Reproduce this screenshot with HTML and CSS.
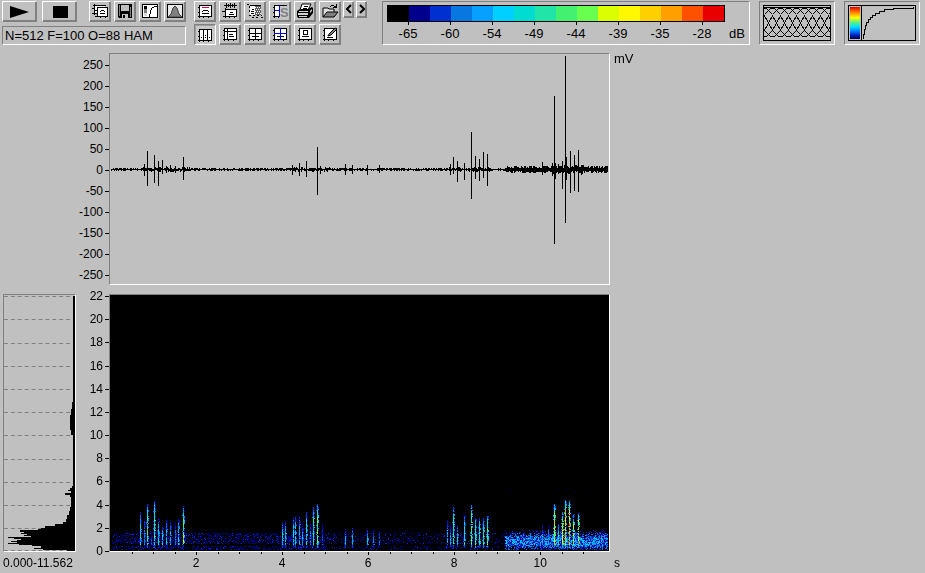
FILE: index.html
```html
<!DOCTYPE html>
<html lang="en">
<head>
    <meta charset="UTF-8">
    <meta name="viewport" content="width=device-width, initial-scale=1.0">
    <title>Spectrogram</title>
    <link rel="stylesheet" href="styles.css">
</head>
<body>
    <!-- Shared plot frame used by most toolbar icons -->
    <svg width="0" height="0" class="defs">
        <g id="frame">
            <path d="M4 3h11v10H4z" fill="#fff"/>
            <path d="M3 2h1v13h-1zM15 2h1v11h-1zM4 2h12v1h-12zM2 13h14v1h-14zM2 4h1v1h-1zM2 9h1v1h-1zM7 14h1v1h-1zM12 14h1v1h-1z"/>
        </g>
    </svg>

    <header class="toolbar">
        <div class="transport">
            <div class="row">
                <button class="btn wide" aria-label="Play"><svg viewBox="0 0 31 16"><path d="M6 3l19 6-19 6z"/></svg></button>
                <button class="btn wide" aria-label="Stop"><svg viewBox="0 0 31 16"><path d="M9 3h15v12H9z"/></svg></button>
                <div class="file-buttons">
                    <button class="btn" aria-label="Copy">
                        <svg viewBox="0 0 18 16"><path d="M3 3h11v8H3z" fill="#fff"/><path d="M2 2h13v1H2zM3 1h1v11H3zM1 5h2v1H1zM1 10h5v1H1z"/><path d="M6 5h11v8H6z" fill="#fff"/><path d="M6 4h11v1H6zM6 4h1v10H6zM16 4h1v10h-1zM4 13h13v1H4zM9 10h5v1H9zM9 8h1v1H9zM13 8h1v1h-1zM10 7h3v1h-3zM9 14h1v1H9zM14 14h1v1h-1zM4 7h2v1H4z"/></svg>
                    </button>
                    <button class="btn" aria-label="Save">
                        <svg viewBox="0 0 18 16"><path d="M2 1h14v14H3l-1-1z"/><path d="M5 2h8v6H5z" fill="#c0c0c0"/><path d="M6 11h6v4H6z" fill="#c0c0c0"/><path d="M7 12h2v3H7z"/><path d="M3 2h1v11H3zM14 4h1v10h-1z" fill="#808080"/></svg>
                    </button>
                    <button class="btn" aria-label="Palette">
                        <svg viewBox="0 0 18 16"><path d="M1 1h16v14H1z"/><path d="M2 2h14v12H2z" fill="#fff"/><path d="M3 3h3v3H3z"/><path d="M3 6h3v4H3z" fill="#808080"/><path d="M3 10h3v3H3z" fill="#d8d8d8"/><path d="M8 11h1v3H8zM9 7h1v4H9zM10 5h1v2h-1zM11 4h2v1h-2zM13 3h3v1h-3z"/></svg>
                    </button>
                    <button class="btn" aria-label="Window function">
                        <svg viewBox="0 0 18 16"><path d="M1 1h16v14H1z"/><path d="M2 2h14v12H2z" fill="#e8e8e8"/><path d="M2 14l3-3 2-6 2-2 2 2 2 6 3 3z" fill="#808080" stroke="#404040"/></svg>
                    </button>
                </div>
            </div>
            <output class="status">N=512 F=100 O=88 HAM</output>
        </div>

        <div class="tools">
            <div class="tool-row">
                <button class="btn" aria-label="Redraw"><svg viewBox="0 0 18 16"><use href="#frame"/><path d="M6 4h7v1H6z" fill="#e00050"/><path d="M7 7h5v1H7zM6 8h1v1H6zM12 8h1v1h-1zM6 10h7v1H6z"/></svg></button>
                <button class="btn" aria-label="Waveform"><svg viewBox="0 0 18 16"><path d="M5 6h11v8H5z" fill="#fff"/><path d="M3 2h13v1H3zM5 0h1v5H5zM7 1h1v3H7zM9 0h1v5H9zM11 1h1v3h-1zM13 0h1v5h-1zM4 5h1v10H4zM4 6h12v1H4zM15 6h1v8h-1zM2 13h14v1H2zM1 8h3v1H1zM8 11h5v1H8zM9 9h3v1H9zM8 14h1v1H8zM13 14h1v1h-1z"/></svg></button>
                <button class="btn" aria-label="Select range"><svg viewBox="0 0 18 16"><path d="M4 3h5v9H4z" fill="#fff"/><path d="M9 3h6v9H9z" fill="#606060"/><path d="M1 1h2v1H1zM4 2h11v1H4zM3 3h1v2H3zM3 7h1v2H3zM3 12h2v1H3zM7 12h2v1H7zM11 12h2v1h-2zM15 12h1v1h-1zM6 6h2v1H6zM5 8h3v1H5zM5 10h3v1H5zM6 14h2v1H6zM10 14h2v1h-2zM15 14h2v1h-2z"/><path d="M9 4h1v1H9zM11 4h1v1h-1zM13 4h1v1h-1zM10 6h1v1h-1zM12 6h1v1h-1zM14 6h1v1h-1zM9 8h1v1H9zM11 8h1v1h-1zM13 8h1v1h-1zM10 10h1v1h-1zM12 10h1v1h-1zM14 10h1v1h-1z" fill="#fff"/></svg></button>
                <button class="btn" aria-label="Spectrum"><svg viewBox="0 0 18 16"><use href="#frame"/><path d="M9 3h9v12H9z" fill="#c8c8c8"/><path d="M8 2h1v12H8zM4 7h5v1H4z" fill="#0000e0"/><text x="9" y="14" class="s-letter">S</text></svg></button>
                <button class="btn" aria-label="Print"><svg viewBox="0 0 18 16"><path d="M6 1h9l-3 6H4z" fill="#fff" stroke="#000"/><path d="M8 3h4v1H8zM7 5h4v1H7z"/><path d="M1 8l3-2h8l4-2 1 1v5l-4 5H2l-1-2z"/><path d="M3 8h9v1H3zM2 10h10v2H2zM3 13h8v1H3zM14 8l2-2v2l-2 2z" fill="#d0d0d0"/></svg></button>
                <button class="btn" aria-label="Open"><svg viewBox="0 0 18 16"><path d="M2 14V5h5l1 1h5v3" fill="#e0e0e0" stroke="#000"/><path d="M2 14l4-5h11l-4 5z" fill="#808080" stroke="#000"/><path d="M10 2h3v1h-3zM9 3h1v1H9zM13 3h1v1h-1zM12 4h4v1h-4zM15 1h1v4h-1zM14 3h1v1h-1z"/></svg></button>
                <div class="steppers">
                    <button class="btn slim" aria-label="Previous"><svg viewBox="0 0 7 12"><path d="M6 2L2 6l4 4" class="chevron"/></svg></button>
                    <button class="btn slim" aria-label="Next"><svg viewBox="0 0 7 12"><path d="M2 2l4 4-4 4" class="chevron"/></svg></button>
                </div>
            </div>
            <div class="tool-row">
                <button class="btn pressed" aria-label="Column cursor"><svg viewBox="0 0 18 16"><use href="#frame"/><path d="M7 3h1v10H7zM11 3h1v10h-1zM5 10h1v1H5zM9 8h1v1H9zM9 10h1v1H9zM13 10h1v1h-1z"/></svg></button>
                <button class="btn" aria-label="Corner cursor"><svg viewBox="0 0 18 16"><use href="#frame"/><path d="M6 3h1v10H6zM4 5h11v1H4zM8 8h4v1H8zM8 10h5v1H8z"/></svg></button>
                <button class="btn" aria-label="Cross cursor"><svg viewBox="0 0 18 16"><use href="#frame"/><path d="M9 3h1v10H9zM4 7h11v1H4zM6 10h7v1H6z"/></svg></button>
                <button class="btn" aria-label="Free cursor"><svg viewBox="0 0 18 16"><use href="#frame"/><path d="M6 10h7v1H6z"/><path d="M9 2h1v12H9zM3 7h13v1H3z" fill="#0000e0"/></svg></button>
                <button class="btn" aria-label="Box cursor"><svg viewBox="0 0 18 16"><use href="#frame"/><path d="M7 4h5v1H7zM7 8h5v1H7zM7 5h1v3H7zM11 5h1v3h-1zM6 10h7v1H6z"/></svg></button>
                <button class="btn" aria-label="Edit"><svg viewBox="0 0 18 16"><use href="#frame"/><path d="M6 11h6v1H6z"/><path d="M8 8l6-6 2 1-6 6-3 1z" fill="#808080" stroke="#000"/></svg></button>
            </div>
        </div>

        <section class="panel scale">
            <div class="scale-bar" id="scaleBar"></div>
            <div class="scale-labels">
                <span>-65</span><span>-60</span><span>-54</span><span>-49</span><span>-44</span><span>-39</span><span>-35</span><span>-28</span>
                <span class="unit">dB</span>
            </div>
        </section>

        <section class="panel preview window-preview">
            <canvas id="overlap" width="66" height="34"></canvas>
        </section>
        <section class="panel preview palette-preview">
            <div class="mini-palette"></div>
            <svg viewBox="0 0 53 34" preserveAspectRatio="none"><path d="M1.500 33v-5h1v-5h1v-4h1v-3h2v-3h2v-2h2v-2h3v-2h4v-2h5v-2h9v-1h20v-1" fill="none" stroke="#000"/></svg>
        </section>
    </header>

    <main class="plots">
        <ul class="axis axis-mv">
            <li>250</li><li>200</li><li>150</li><li>100</li><li>50</li><li>0</li>
            <li>-50</li><li>-100</li><li>-150</li><li>-200</li><li>-250</li>
        </ul>
        <div class="plot wave"><canvas id="wave" width="499" height="230"></canvas></div>
        <span class="unit-mv">mV</span>

        <div class="plot average">
            <svg viewBox="0 0 72 256" preserveAspectRatio="none">
                <path class="grid-line" d="M0 1.500h72M0 24.500h72M0 48.500h72M0 71.500h72M0 94.500h72M0 117.500h72M0 140.500h72M0 164.500h72M0 187.500h72M0 210.500h72M0 233.500h72M0 255.500h72"/>
                <path d="M72 1H70V107H69V114H68V120H67V135H68V140H70V191H69V193H67V195H65V196H68V198H62V200H67V202H68V212H67V216H66V220H64V224H63V227H60V229H52V231H42V233H38V234H34V235H16V237H20V238H17V239H23V240H20V241H27V242H4V243H10V244H17V245H13V246H7V247H13V248H4V249H15V250H28V251H38V253H30V254H40V255H64V256H72z"/>
            </svg>
        </div>
        <ul class="axis axis-khz">
            <li>22</li><li>20</li><li>18</li><li>16</li><li>14</li><li>12</li>
            <li>10</li><li>8</li><li>6</li><li>4</li><li>2</li><li>0</li>
        </ul>
        <div class="plot spectro"><canvas id="spectro" width="499" height="256"></canvas></div>

        <span class="range">0.000-11.562</span>
        <div class="axis-time">
            <svg viewBox="0 0 499 3" preserveAspectRatio="none"><path d="M22.500 0v2M43.500 0v2M65.500 0v2M86.500 0v3M108.500 0v2M129.500 0v2M151.500 0v2M172.500 0v3M194.500 0v2M215.500 0v2M237.500 0v2M258.500 0v3M280.500 0v2M301.500 0v2M323.500 0v2M344.500 0v3M366.500 0v2M387.500 0v2M409.500 0v2M430.500 0v3M452.500 0v2M473.500 0v2" stroke="#000"/></svg>
            <div class="time-labels"><span>2</span><span>4</span><span>6</span><span>8</span><span>10</span></div>
        </div>
        <span class="unit-s">s</span>
    </main>

    <script src="plots.js"></script>
</body>
</html>
```
FILE: styles.css
```css
* {
    box-sizing: border-box;
}

body {
    margin: 0;
    height: 100vh;
    min-height: 480px;
    display: flex;
    flex-direction: column;
    overflow: hidden;
    background: #c0c0c0;
    color: #000;
    font-family: "Liberation Sans", Arial, sans-serif;
    font-size: 12px;
    line-height: 15px;
}

.defs {
    position: absolute;
}

svg {
    display: block;
    shape-rendering: crispEdges;
}

canvas {
    display: block;
    width: 100%;
    height: 100%;
    image-rendering: pixelated;
}

/* Toolbar */
.toolbar {
    display: flex;
    align-items: flex-start;
    padding: 1px 5px 0 2px;
    height: 53px;
    flex: none;
}

.transport {
    width: 184px;
    margin-right: 8px;
    flex: none;
}

.row {
    display: flex;
    gap: 5px;
}

.file-buttons {
    display: flex;
    gap: 3px;
    margin-left: auto;
}

.tools {
    display: flex;
    flex-direction: column;
    gap: 2px;
    margin-right: 15px;
    flex: none;
}

.tool-row {
    display: flex;
    gap: 3px;
}

.btn {
    width: 22px;
    height: 21px;
    padding: 1px;
    display: flex;
    align-items: flex-start;
    justify-content: flex-start;
    background: #c0c0c0;
    border: 1px solid;
    border-color: #fff #808080 #808080 #fff;
    box-shadow: inset -1px -1px #808080;
}

.btn svg {
    width: 18px;
    height: 16px;
    flex: none;
    shape-rendering: auto;
}

.btn.wide {
    width: 35px;
}

.btn.wide svg {
    width: 31px;
}

.btn.slim {
    width: 11px;
    height: 17px;
}

.btn.slim svg {
    width: 7px;
    height: 12px;
}

.btn.pressed {
    border-color: #808080 #fff #fff #808080;
    box-shadow: inset 1px 1px #a0a0a0;
    padding-top: 2px;
    background: #c8c8c8;
}

.steppers {
    display: flex;
    gap: 2px;
    margin-left: -1px;
}

.chevron {
    fill: none;
    stroke: #000;
    stroke-width: 2;
}

.s-letter {
    font-size: 13px;
    font-weight: bold;
    fill: #808080;
}

.status {
    display: block;
    margin-top: 4px;
    height: 19px;
    padding: 0 2px;
    font-size: 13px;
    line-height: 17px;
    white-space: nowrap;
}

.status,
.panel,
.plot {
    border: 1px solid;
    border-color: #808080 #fff #fff #808080;
}

.panel {
    height: 44px;
    flex: none;
}

/* Colour scale */
.scale {
    width: 368px;
    padding: 3px 4px;
    margin-right: 9px;
}

.scale-bar {
    display: flex;
    width: 338px;
    height: 17px;
    border: 1px solid #000;
}

.scale-bar i {
    flex: 1;
}

.scale-labels {
    display: flex;
    font-size: 13px;
}

.scale-labels span {
    width: 42px;
    flex: none;
    display: flex;
    flex-direction: column;
    align-items: center;
    line-height: 17px;
}

.scale-labels span::before {
    content: "";
    width: 1px;
    height: 3px;
    background: #000;
}

.scale-labels .unit {
    width: 22px;
    align-items: flex-end;
}

.scale-labels .unit::before {
    background: none;
}

/* Small previews */
.preview {
    width: 76px;
    padding: 3px;
}

.preview canvas {
    border: 1px solid #000;
}

.window-preview {
    margin-right: 9px;
}

.palette-preview {
    display: flex;
}

.mini-palette {
    width: 14px;
    border: 1px solid #000;
    background: linear-gradient(#e00000, #ff7000 15%, #ffff00 33%, #60f080 48%, #00e0ff 62%, #0080ff 75%, #0020c0 88%, #000040) content-box;
    padding: 1px;
}

.palette-preview svg {
    flex: 1;
    min-width: 0;
    height: 36px;
    border: 1px solid #000;
    border-left: 0;
}

/* Plots */
.plots {
    flex: 1;
    display: grid;
    grid-template-columns: 73px 33px 501fr 315fr;
    grid-template-rows: 232fr 9px 258fr 21px;
    padding-left: 3px;
    min-height: 0;
}

.plot {
    min-width: 0;
    min-height: 0;
    overflow: hidden;
}

.wave {
    grid-area: 1 / 3;
}

.spectro {
    grid-area: 3 / 3;
    background: #000;
}

.average {
    grid-area: 3 / 1;
}

.average svg {
    width: 100%;
    height: 100%;
}

.grid-line {
    fill: none;
    stroke: #808080;
    stroke-dasharray: 4 3;
}

.axis {
    list-style: none;
    margin: 0;
    padding: 0;
    display: flex;
    flex-direction: column;
}

.axis li {
    display: flex;
    align-items: center;
    justify-content: flex-end;
    gap: 2px;
    height: 15px;
}

.axis li::after {
    content: "";
    width: 4px;
    height: 1px;
    background: #000;
}

.axis-mv {
    grid-area: 1 / 1 / 2 / 3;
    padding-top: 2px;
    margin-bottom: -1px;
}

.axis-mv li {
    flex: 1;
}

.axis-khz {
    grid-area: 3 / 2;
    justify-content: space-between;
    margin: -5px 0 -7px;
}

.unit-mv {
    grid-area: 1 / 4;
    font-size: 13px;
    padding: 0 4px;
    line-height: 12px;
}

.unit-s {
    grid-area: 4 / 4;
    padding: 4px;
}

.range {
    grid-area: 4 / 1 / 5 / 3;
    padding: 4px 0;
}

.axis-time {
    grid-area: 4 / 3;
    padding: 0 1px;
}

.axis-time svg {
    width: 100%;
    height: 3px;
}

.time-labels {
    display: flex;
    padding-top: 1px;
}

.time-labels span {
    flex: 20;
    text-align: center;
}

.time-labels::before {
    content: "";
    flex: 10;
}

.time-labels::after {
    content: "";
    flex: 6;
}
```
FILE: plots.js
```js
const palette = ['#000000', '#00008c', '#0030d0', '#0878e0', '#08a0ff', '#00d0ff', '#00dcd0', '#20e4a8',
    '#44f070', '#68ff50', '#dcff00', '#fff800', '#ffd000', '#ffa000', '#ff5000', '#e80000'];

// Repeatable noise, so the plots look the same on every load
let seed = 7;
function rnd() {
    seed = (seed * 16807) % 2147483647;
    return seed / 2147483647;
}

function drawScale() {
    const bar = document.getElementById('scaleBar');
    palette.forEach(color => {
        const cell = document.createElement('i');
        cell.style.background = color;
        bar.appendChild(cell);
    });
}

// Overlapping analysis windows
function drawOverlap() {
    const ctx = document.getElementById('overlap').getContext('2d');
    ctx.fillRect(0, 1, 66, 1);
    for (let shift = 0; shift < 48; shift += 8) {
        for (let x = 0; x < 66; x++) {
            const y = Math.round(16 - 14 * Math.cos(2 * Math.PI * (x - shift) / 48));
            ctx.fillRect(x, y, 1, 1);
            // steep parts need two pixels per column
            if (y > 8 && y < 24) ctx.fillRect(x, y + 1, 1, 1);
        }
    }
}

// [x, peak above zero, peak below zero]
const spikes = [
    [34, 5, 6], [37, 18, 16], [44, 14, 13], [48, 8, 16], [52, 9, 4], [56, 3, 3], [60, 4, 2], [65, 3, 3], [73, 12, 10],
    [182, 4, 5], [189, 6, 6], [196, 8, 7], [207, 22, 25], [210, 3, 4], [235, 5, 5], [242, 4, 4], [257, 4, 5], [269, 4, 3],
    [340, 5, 5], [343, 12, 4], [347, 8, 12], [354, 6, 10], [361, 37, 29], [365, 13, 9], [369, 10, 11], [373, 17, 8],
    [377, 15, 16], [432, 7, 5], [442, 6, 6], [444, 73, 74], [445, 6, 9], [448, 5, 4], [452, 8, 19], [455, 113, 53],
    [456, 12, 10], [460, 18, 23], [464, 14, 21], [468, 19, 22], [471, 4, 5]
];

function drawWave() {
    const ctx = document.getElementById('wave').getContext('2d');
    const zero = 115;
    for (let x = 1; x < 498; x++) {
        let base = 0;
        let amp = 0.9;
        if ((x > 30 && x < 80) || (x > 335 && x < 380) || (x > 180 && x < 220)) amp = 1.8;
        if (x > 395) {
            base = 1;
            amp = 2.4;
        }
        if (x > 440 && x < 475) amp = 3.4;
        const up = base + Math.round(rnd() * amp);
        const down = base + Math.round(rnd() * amp);
        ctx.fillRect(x, zero - up, 1, up + down + 1);
    }
    spikes.forEach(([x, up, down]) => ctx.fillRect(x, zero - up, 1, up + down + 1));
}

// [x, top, strength]
const calls = [
    [30, 217, 6], [34, 223, 4], [37, 209, 8], [41, 235, 3], [44, 206, 8], [48, 223, 6], [52, 230, 6], [56, 224, 5],
    [60, 225, 5], [65, 227, 4], [68, 223, 6], [73, 211, 9], [172, 227, 6], [175, 226, 6], [179, 238, 3], [183, 223, 6],
    [185, 221, 6], [189, 221, 5], [192, 228, 5], [196, 217, 7], [200, 228, 4], [203, 212, 7], [207, 209, 9],
    [212, 228, 3], [235, 234, 6], [242, 233, 6], [257, 234, 6], [263, 234, 4], [269, 235, 4], [337, 225, 5],
    [340, 230, 5], [343, 212, 8], [347, 231, 6], [354, 220, 7], [361, 210, 9], [365, 223, 9], [369, 223, 8],
    [373, 223, 8], [377, 221, 9], [432, 230, 5], [438, 231, 5], [444, 209, 11], [448, 229, 8], [452, 217, 12],
    [455, 205, 13], [459, 206, 13], [463, 219, 11], [468, 217, 12]
];

function drawSpectro() {
    const ctx = document.getElementById('spectro').getContext('2d');
    const dot = (x, y, level) => {
        if (level < 1) return;
        ctx.fillStyle = palette[Math.min(15, Math.floor(level))];
        ctx.fillRect(x, y, 1, 1);
    };

    // Background noise below 1.5 kHz
    for (let x = 2; x < 395; x++) {
        const density = x > 215 ? 0.2 : 0.42;
        for (let y = 238; y < 255; y++) {
            if (y > 248 && y < 251) continue;
            if (rnd() < density) {
                ctx.fillStyle = rnd() < 0.2 ? '#0828b8' : '#000070';
                ctx.fillRect(x, y, 1, 1);
            }
        }
    }
    for (let x = 395; x < 498; x++) {
        for (let y = 234; y < 255; y++) {
            const centre = 1 - Math.abs(y - 246) / 12;
            if (rnd() < centre * 1.4) dot(x, y, 1 + rnd() * 5 * Math.min(1, centre + 0.2));
        }
    }

    calls.forEach(([x, top, strength]) => {
        for (let y = top; y < 253; y++) {
            const depth = Math.min(1, (y - top + 6) / 18);
            const fade = y > 249 ? 0.4 : 1;
            if (rnd() < 0.95) dot(x, y, strength * depth * fade * (0.6 + rnd() * 0.6));
            if (rnd() < 0.55) dot(x + 1, y, strength * depth * fade * rnd() * 0.8);
            if (rnd() < 0.3) dot(x - 1, y, strength * depth * rnd() * 0.5);
        }
    });

    // Faint specks above the loudest calls
    ctx.fillStyle = '#000040';
    [[399, 195], [446, 194], [455, 194], [464, 196], [478, 196]].forEach(([x, y]) => ctx.fillRect(x, y, 2, 1));
}

drawScale();
drawOverlap();
drawWave();
drawSpectro();
```
